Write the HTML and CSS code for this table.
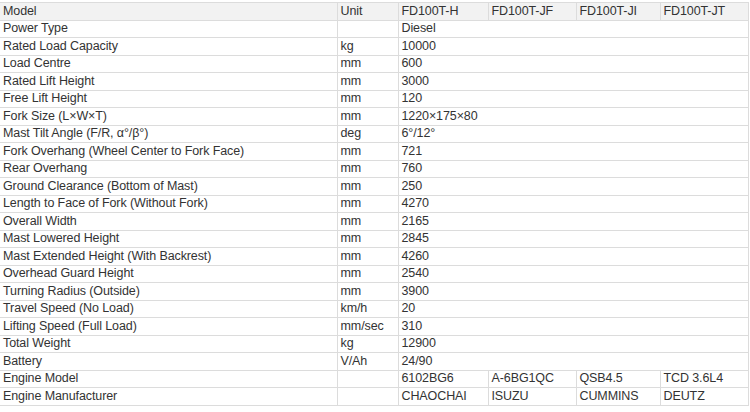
FILE: index.html
```html
<!DOCTYPE html>
<html>
<head>
<meta charset="utf-8">
<link rel="stylesheet" href="styles.css">
</head>
<body>
<table class="spec">
  <colgroup>
    <col class="c-name"><col class="c-unit"><col class="c-h"><col class="c-jf"><col class="c-ji"><col class="c-jt">
  </colgroup>
  <tr class="head"><td>Model</td><td>Unit</td><td>FD100T-H</td><td>FD100T-JF</td><td>FD100T-JI</td><td>FD100T-JT</td></tr>
  <tr><td>Power Type</td><td></td><td colspan="4">Diesel</td></tr>
  <tr><td>Rated Load Capacity</td><td>kg</td><td colspan="4">10000</td></tr>
  <tr><td>Load Centre</td><td>mm</td><td colspan="4">600</td></tr>
  <tr><td>Rated Lift Height</td><td>mm</td><td colspan="4">3000</td></tr>
  <tr><td>Free Lift Height</td><td>mm</td><td colspan="4">120</td></tr>
  <tr><td>Fork Size (L×W×T)</td><td>mm</td><td colspan="4">1220×175×80</td></tr>
  <tr><td>Mast Tilt Angle (F/R, α°/β°)</td><td>deg</td><td colspan="4">6°/12°</td></tr>
  <tr><td>Fork Overhang (Wheel Center to Fork Face)</td><td>mm</td><td colspan="4">721</td></tr>
  <tr><td>Rear Overhang</td><td>mm</td><td colspan="4">760</td></tr>
  <tr><td>Ground Clearance (Bottom of Mast)</td><td>mm</td><td colspan="4">250</td></tr>
  <tr><td>Length to Face of Fork (Without Fork)</td><td>mm</td><td colspan="4">4270</td></tr>
  <tr><td>Overall Width</td><td>mm</td><td colspan="4">2165</td></tr>
  <tr><td>Mast Lowered Height</td><td>mm</td><td colspan="4">2845</td></tr>
  <tr><td>Mast Extended Height (With Backrest)</td><td>mm</td><td colspan="4">4260</td></tr>
  <tr><td>Overhead Guard Height</td><td>mm</td><td colspan="4">2540</td></tr>
  <tr><td>Turning Radius (Outside)</td><td>mm</td><td colspan="4">3900</td></tr>
  <tr><td>Travel Speed (No Load)</td><td>km/h</td><td colspan="4">20</td></tr>
  <tr><td>Lifting Speed (Full Load)</td><td>mm/sec</td><td colspan="4">310</td></tr>
  <tr><td>Total Weight</td><td>kg</td><td colspan="4">12900</td></tr>
  <tr><td>Battery</td><td>V/Ah</td><td colspan="4">24/90</td></tr>
  <tr><td>Engine Model</td><td></td><td>6102BG6</td><td>A-6BG1QC</td><td>QSB4.5</td><td>TCD 3.6L4</td></tr>
  <tr><td>Engine Manufacturer</td><td></td><td>CHAOCHAI</td><td>ISUZU</td><td>CUMMINS</td><td>DEUTZ</td></tr>
</table>
</body>
</html>
```
FILE: styles.css
```css
html, body {
  margin: 0;
  padding: 0;
  background: #ffffff;
}
body {
  padding-top: 2px;
  font-family: "Liberation Sans", Arial, sans-serif;
  font-size: 12.5px;
  letter-spacing: -0.1px;
  color: #333333;
}
.spec {
  width: 748px;
  border-collapse: collapse;
  table-layout: fixed;
}
.c-name { width: 337px; }
.c-unit { width: 61px; }
.c-h { width: 90px; }
.c-jf { width: 88px; }
.c-ji { width: 84px; }
.c-jt { width: 88px; }
.spec td {
  height: 17.5px;
  padding: 0 2px 0 3px;
  border: 1px solid #dcdcdc;
  box-sizing: border-box;
  white-space: nowrap;
  overflow: hidden;
  line-height: 15px;
  vertical-align: middle;
}
.spec td:first-child {
  border-left: none;
}
.spec .head td {
  background: #f2f2f2;
}
```
